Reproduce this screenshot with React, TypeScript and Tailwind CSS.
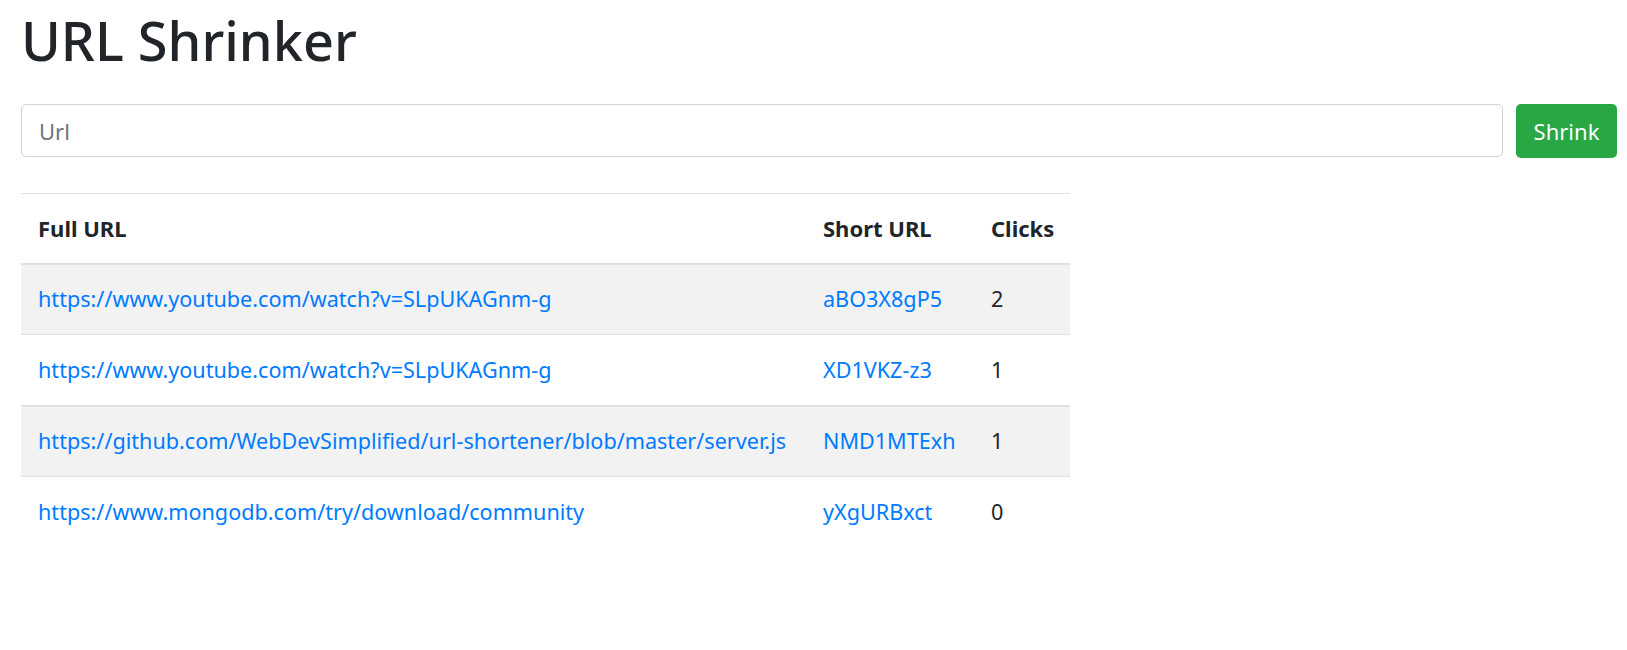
import React from "react";

interface LinkRow {
  full: string;
  short: string;
  clicks: number;
}

const rows: LinkRow[] = [
  { full: "https://www.youtube.com/watch?v=SLpUKAGnm-g", short: "aBO3X8gP5", clicks: 2 },
  { full: "https://www.youtube.com/watch?v=SLpUKAGnm-g", short: "XD1VKZ-z3", clicks: 1 },
  {
    full: "https://github.com/WebDevSimplified/url-shortener/blob/master/server.js",
    short: "NMD1MTExh",
    clicks: 1,
  },
  { full: "https://www.mongodb.com/try/download/community", short: "yXgURBxct", clicks: 0 },
];

// borders at 1.4x zoom render as 1px or 2px depending on where they land
const rowBorders = [
  "",
  "border-t border-[#dee2e6]",
  "border-t-2 border-[#dee2e6]",
  "border-t border-[#dee2e6]",
];

export default function App() {
  return (
    <div
      className="min-h-screen bg-white pl-[21px] pr-[10px] text-[#212529]"
      style={{ fontFamily: '"Noto Sans", "Open Sans", sans-serif' }}
    >
      <h1 className="m-0 pt-[7px] text-[54px] font-medium leading-[67px]">URL Shrinker</h1>

      <form className="mt-[30px] flex items-start gap-[13px]" onSubmit={(e) => e.preventDefault()}>
        <input
          type="url"
          placeholder="Url"
          className="h-[53px] flex-1 rounded-[5px] border border-[#ced4da] bg-white px-[17px] text-[22px] text-[#495057] outline-none placeholder:text-[#6c757d]"
        />
        <button
          type="submit"
          className="h-[54px] w-[101px] rounded-[5px] bg-[#28a745] text-[22px] text-white"
        >
          Shrink
        </button>
      </form>

      <table className="mt-[35px] w-[1049px] table-fixed border-collapse">
        <colgroup>
          <col className="w-[785px]" />
          <col className="w-[168px]" />
          <col className="w-[96px]" />
        </colgroup>
        <thead>
          <tr className="border-t border-b-2 border-[#dee2e6] text-[22px]">
            <th className="h-[70px] px-[17px] text-left align-middle font-bold">Full URL</th>
            <th className="h-[70px] px-[17px] text-left align-middle font-bold">Short URL</th>
            <th className="h-[70px] px-[17px] text-left align-middle font-bold">Clicks</th>
          </tr>
        </thead>
        <tbody className="text-[21.6px]">
          {rows.map((r, i) => (
            <tr key={i} className={`${rowBorders[i]} ${i % 2 === 0 ? "bg-[#f2f2f2]" : "bg-white"}`}>
              <td className="h-[71px] whitespace-nowrap px-[17px] align-middle">
                <a href={r.full} className="text-[#007bff] no-underline">
                  {r.full}
                </a>
              </td>
              <td className="h-[71px] whitespace-nowrap px-[17px] align-middle">
                <a href={"/" + r.short} className="text-[#007bff] no-underline">
                  {r.short}
                </a>
              </td>
              <td className="h-[71px] px-[17px] align-middle">{r.clicks}</td>
            </tr>
          ))}
        </tbody>
      </table>
    </div>
  );
}
